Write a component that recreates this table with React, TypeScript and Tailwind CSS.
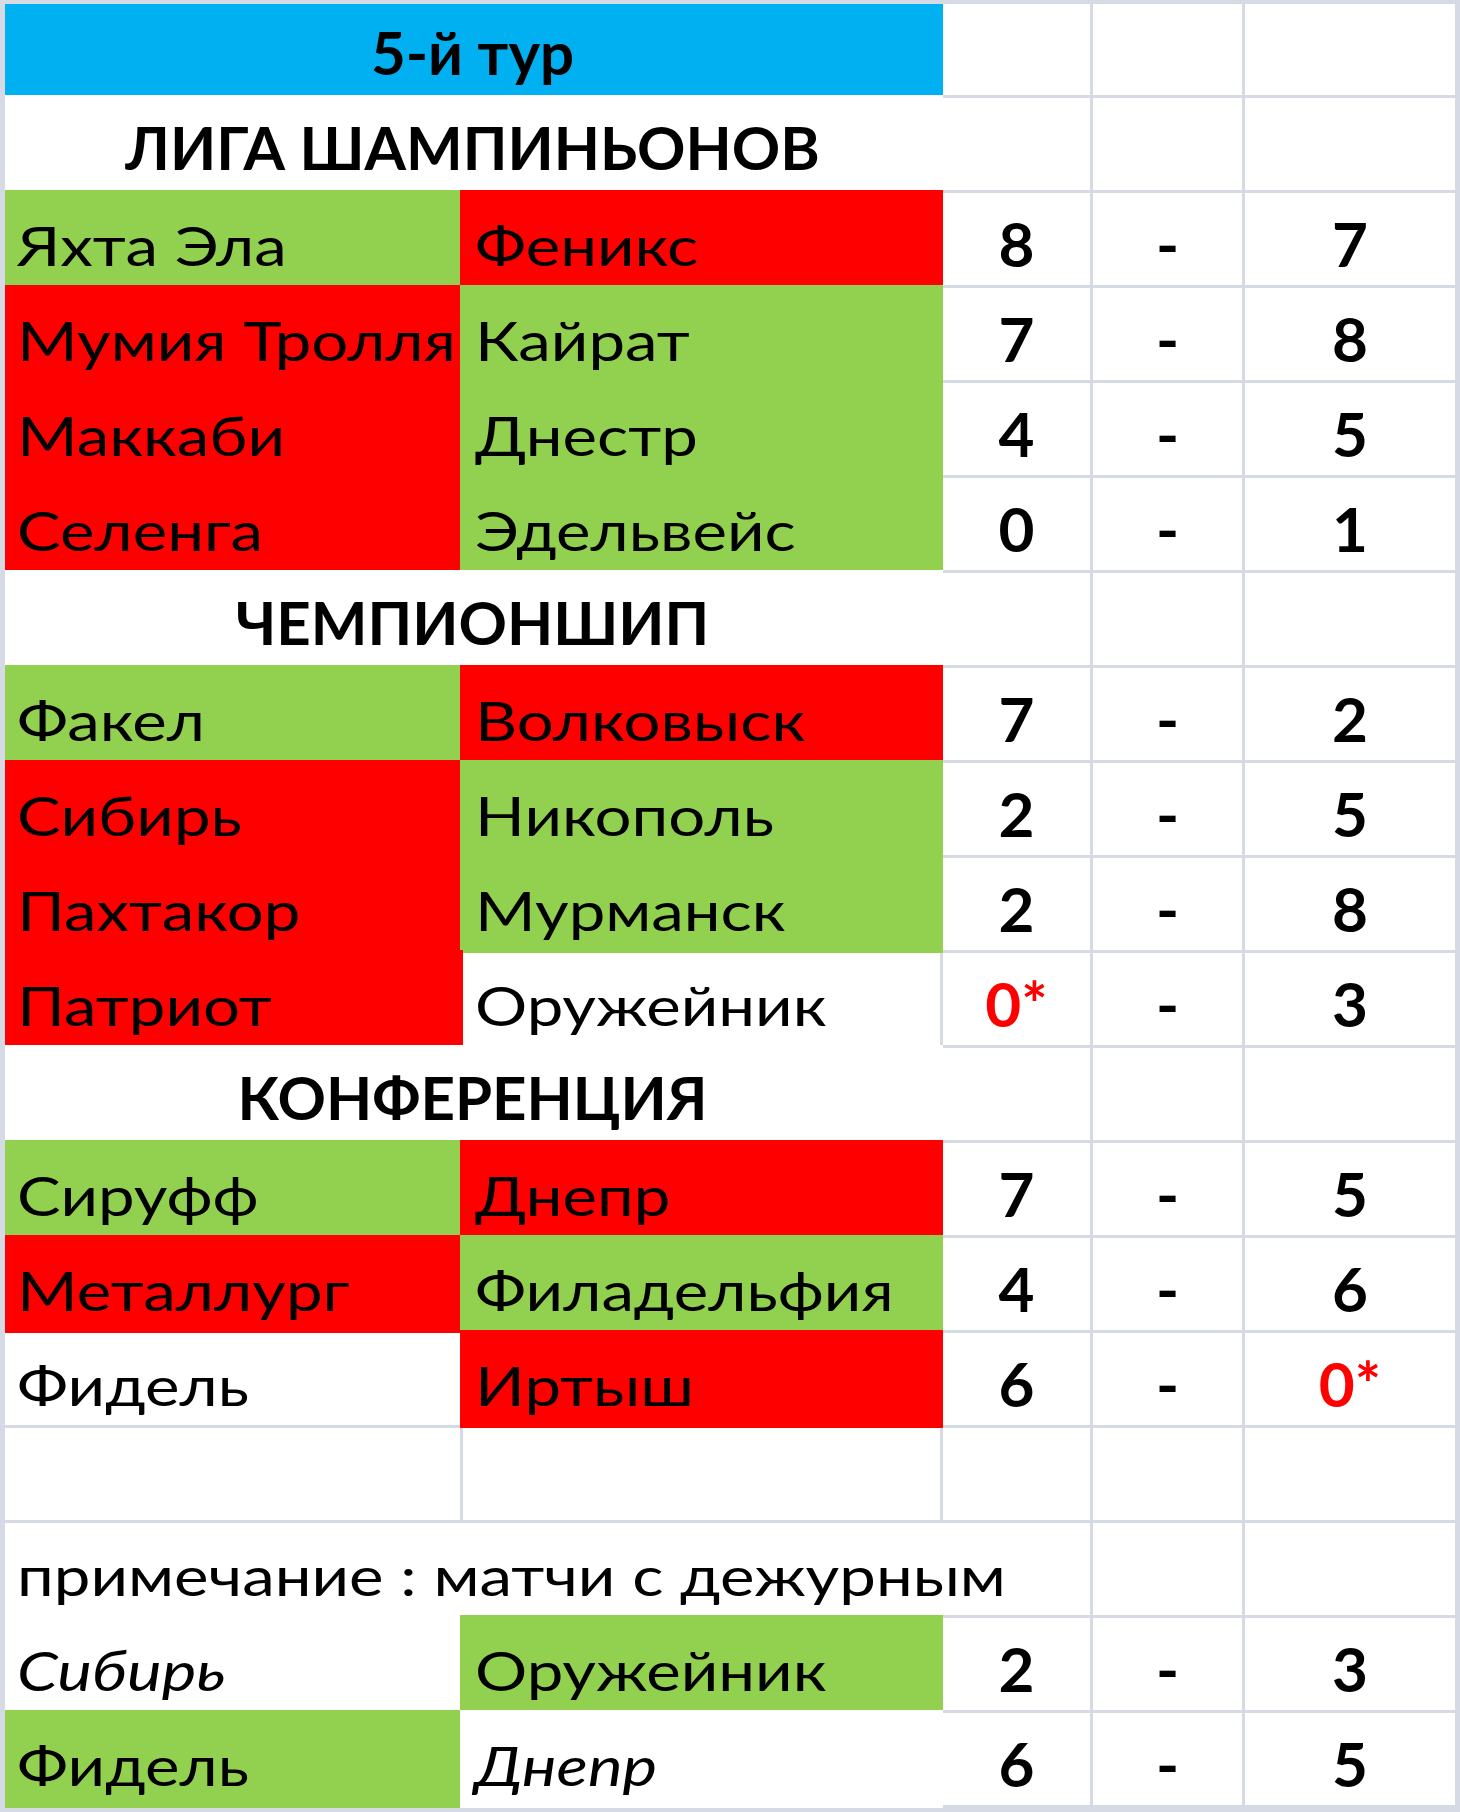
import React from 'react'

type Fill = 'green' | 'red' | 'blue' | 'white'

interface Cell {
  text?: string
  fill?: Fill
  span?: number
  kind?: 'team' | 'score' | 'title'
  italic?: boolean
  red?: boolean
}

// заливка перекрывает сетку вокруг ячейки, как в Excel
const fillClass: Record<Fill, string> = {
  green: 'bg-[#92d050] ring-[3px] ring-[#92d050]',
  red: 'bg-[#ff0000] ring-[3px] ring-[#ff0000]',
  blue: 'bg-[#00b0f0] ring-[3px] ring-[#00b0f0]',
  white: 'bg-white ring-[3px] ring-white',
}

const kindClass = {
  team: 'justify-start pl-3 pb-[12px] text-[54px]',
  score: 'justify-center pb-[11px] text-[62px] font-bold',
  title: 'justify-center pb-[13px] text-[60px] font-bold',
}

function match(
  home: string, homeFill: Fill | undefined,
  away: string, awayFill: Fill | undefined,
  s1: string, s2: string,
  extra: { homeItalic?: boolean; awayItalic?: boolean } = {}
): Cell[] {
  return [
    { text: home, fill: homeFill, kind: 'team', italic: extra.homeItalic },
    { text: away, fill: awayFill, kind: 'team', italic: extra.awayItalic },
    { text: s1, kind: 'score', red: s1.includes('*') },
    { text: '-', kind: 'score' },
    { text: s2, kind: 'score', red: s2.includes('*') },
  ]
}

function header(text: string, fill: Fill): Cell[] {
  return [{ text, fill, span: 2, kind: 'title' }, {}, {}, {}]
}

const rows: Cell[][] = [
  header('5-й тур', 'blue'),
  header('ЛИГА ШАМПИНЬОНОВ', 'white'),
  match('Яхта Эла', 'green', 'Феникс', 'red', '8', '7'),
  match('Мумия Тролля', 'red', 'Кайрат', 'green', '7', '8'),
  match('Маккаби', 'red', 'Днестр', 'green', '4', '5'),
  match('Селенга', 'red', 'Эдельвейс', 'green', '0', '1'),
  header('ЧЕМПИОНШИП', 'white'),
  match('Факел', 'green', 'Волковыск', 'red', '7', '2'),
  match('Сибирь', 'red', 'Никополь', 'green', '2', '5'),
  match('Пахтакор', 'red', 'Мурманск', 'green', '2', '8'),
  match('Патриот', 'red', 'Оружейник', undefined, '0*', '3'),
  header('КОНФЕРЕНЦИЯ', 'white'),
  match('Сируфф', 'green', 'Днепр', 'red', '7', '5'),
  match('Металлург', 'red', 'Филадельфия', 'green', '4', '6'),
  match('Фидель', undefined, 'Иртыш', 'red', '6', '0*'),
  [{}, {}, {}, {}, {}],
  [{ text: 'примечание : матчи с дежурным', span: 3, kind: 'team' }, {}, {}],
  match('Сибирь', 'white', 'Оружейник', 'green', '2', '3', { homeItalic: true }),
  match('Фидель', 'green', 'Днепр', 'white', '6', '5', { awayItalic: true }),
]

export default function App() {
  return (
    <div className="w-[1460px] h-[1812px] bg-[#d5dae5] pl-[5px] pt-[4px] font-['Lato','Open_Sans',sans-serif] text-black">
      <div className="grid w-max grid-cols-[455px_477px_147px_149px_210px] grid-rows-[91px_repeat(18,92px)] gap-[3px] overflow-hidden bg-[#d5dae5] pr-[3px] pb-[3px]">
        {rows.map((row, r) =>
          row.map((cell, c) => (
            <div
              key={`${r}-${c}`}
              className={[
                'flex items-end whitespace-nowrap leading-none',
                cell.span === 2 ? 'col-span-2' : cell.span === 3 ? 'col-span-3' : '',
                cell.fill ? fillClass[cell.fill] : 'bg-white',
                cell.kind ? kindClass[cell.kind] : '',
                cell.italic ? 'italic' : '',
                cell.red ? 'text-[#ff0000]' : '',
              ].join(' ')}
            >
              {cell.kind === 'team' ? (
                // шрифт в таблице шире обычного Lato
                <span className="inline-block origin-left scale-x-[1.21]">{cell.text}</span>
              ) : (
                cell.text
              )}
            </div>
          ))
        )}
      </div>
    </div>
  )
}
